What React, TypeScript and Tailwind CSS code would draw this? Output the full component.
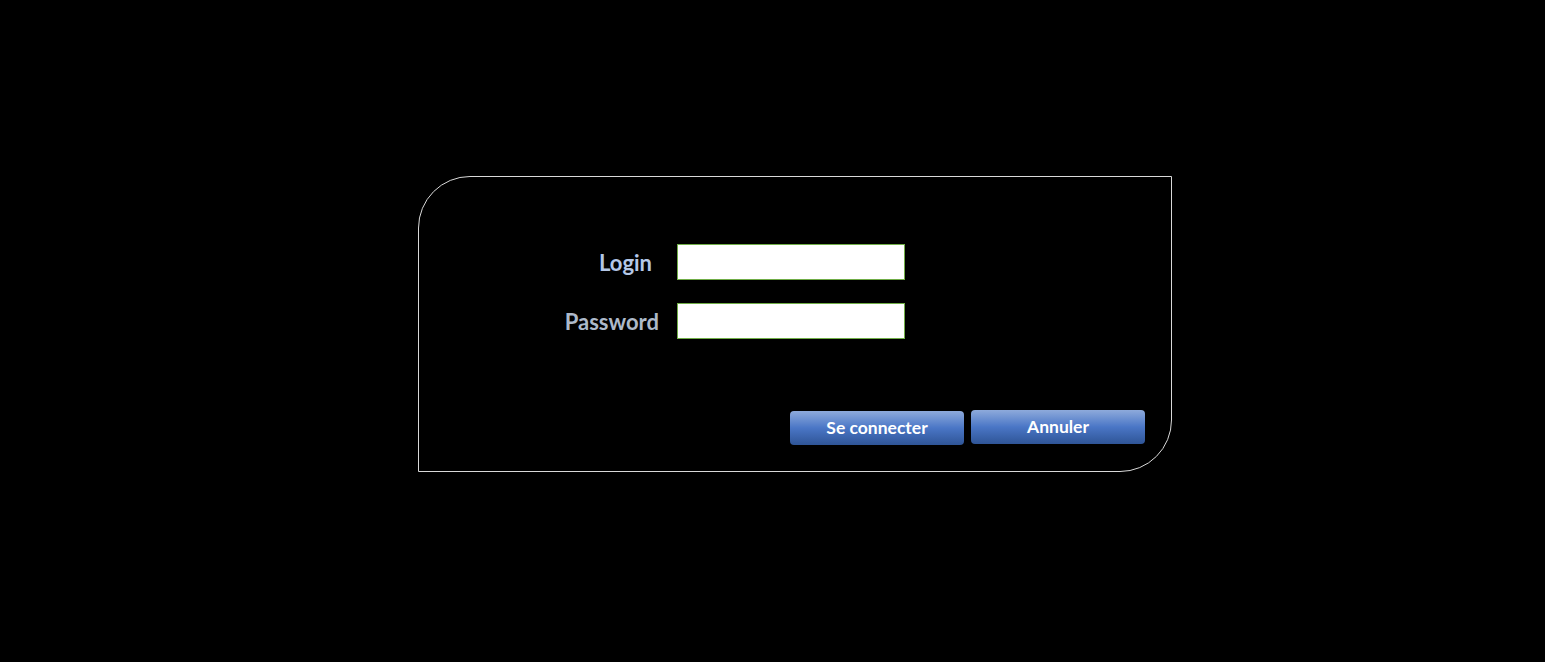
import React from 'react'

const LoginPanel = () => {
  return (
    <div className="min-h-[662px] w-full bg-black pl-[418px] pt-[176px] font-['Lato','Liberation_Sans',sans-serif]">
      <div className="flex h-[296px] w-[754px] flex-col rounded-tl-[52px] rounded-br-[52px] border border-[#d9d9d9] pt-[67px]">
        {/* fields */}
        <div className="flex items-center">
          <div className="w-[233px] text-right text-[22px] font-bold text-[#b4c7e7]">Login</div>
          <input
            type="text"
            className="ml-[25px] h-[36px] w-[228px] border border-[#70ad47] bg-white px-1 outline-none"
          />
        </div>
        <div className="mt-[23px] flex items-center">
          <div className="w-[240px] text-right text-[22px] font-bold text-[#adb9ca]">Password</div>
          <input
            type="password"
            className="ml-[18px] h-[36px] w-[228px] border border-[#70ad47] bg-white px-1 outline-none"
          />
        </div>

        {/* actions */}
        <div className="mt-[71px] flex items-start pl-[371px]">
          <button className="mt-px h-[34px] w-[174px] rounded-[4px] bg-gradient-to-b from-[#8eaadb] via-[#4a76c6] to-[#2f5597] text-[17.5px] font-bold text-white">
            Se connecter
          </button>
          <button className="ml-[7px] h-[34px] w-[174px] rounded-[4px] bg-gradient-to-b from-[#8eaadb] via-[#4a76c6] to-[#2f5597] text-[17.5px] font-bold text-white">
            Annuler
          </button>
        </div>
      </div>
    </div>
  )
}

export default function App() {
  return <LoginPanel />
}
